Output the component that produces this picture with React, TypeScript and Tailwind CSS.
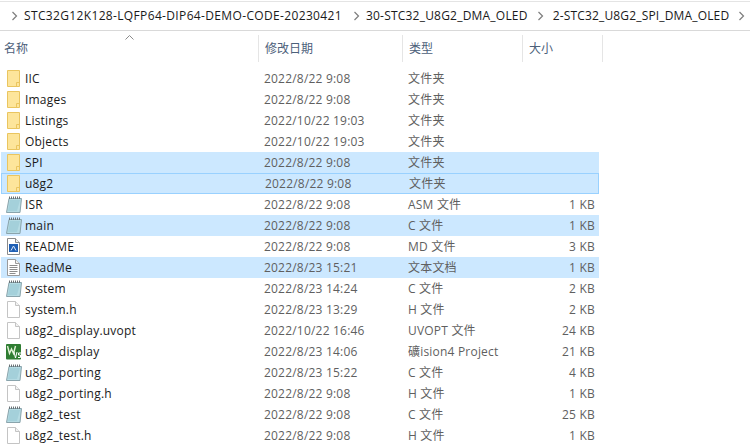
type Kind = 'folder' | 'asm' | 'word' | 'text' | 'blank' | 'keil';

type FileRow = {
  name: string;
  date: string;
  type: string;
  size?: string;
  kind: Kind;
  selected?: boolean;
  focused?: boolean;
};

const rows: FileRow[] = [
  { name: 'IIC', date: '2022/8/22 9:08', type: '文件夹', kind: 'folder' },
  { name: 'Images', date: '2022/8/22 9:08', type: '文件夹', kind: 'folder' },
  { name: 'Listings', date: '2022/10/22 19:03', type: '文件夹', kind: 'folder' },
  { name: 'Objects', date: '2022/10/22 19:03', type: '文件夹', kind: 'folder' },
  { name: 'SPI', date: '2022/8/22 9:08', type: '文件夹', kind: 'folder', selected: true },
  { name: 'u8g2', date: '2022/8/22 9:08', type: '文件夹', kind: 'folder', selected: true, focused: true },
  { name: 'ISR', date: '2022/8/22 9:08', type: 'ASM 文件', size: '1 KB', kind: 'asm' },
  { name: 'main', date: '2022/8/22 9:08', type: 'C 文件', size: '1 KB', kind: 'asm', selected: true },
  { name: 'README', date: '2022/8/22 9:08', type: 'MD 文件', size: '3 KB', kind: 'word' },
  { name: 'ReadMe', date: '2022/8/23 15:21', type: '文本文档', size: '1 KB', kind: 'text', selected: true },
  { name: 'system', date: '2022/8/23 14:24', type: 'C 文件', size: '2 KB', kind: 'asm' },
  { name: 'system.h', date: '2022/8/23 13:29', type: 'H 文件', size: '2 KB', kind: 'blank' },
  { name: 'u8g2_display.uvopt', date: '2022/10/22 16:46', type: 'UVOPT 文件', size: '24 KB', kind: 'blank' },
  { name: 'u8g2_display', date: '2022/8/23 14:06', type: '礦ision4 Project', size: '21 KB', kind: 'keil' },
  { name: 'u8g2_porting', date: '2022/8/23 15:22', type: 'C 文件', size: '4 KB', kind: 'asm' },
  { name: 'u8g2_porting.h', date: '2022/8/22 9:08', type: 'H 文件', size: '1 KB', kind: 'blank' },
  { name: 'u8g2_test', date: '2022/8/22 9:08', type: 'C 文件', size: '25 KB', kind: 'asm' },
  { name: 'u8g2_test.h', date: '2022/8/22 9:08', type: 'H 文件', size: '1 KB', kind: 'blank' },
];

function Chevron() {
  return (
    <svg width="7" height="10" viewBox="0 0 7 10" className="shrink-0">
      <path d="M1.5 1 L5.5 5 L1.5 9" fill="none" stroke="#7d7d7d" strokeWidth="1.2" />
    </svg>
  );
}

function Page({ stroke = '#c4c4c4', children }: { stroke?: string; children?: React.ReactNode }) {
  return (
    <svg width="16" height="17" viewBox="0 0 16 17" className="shrink-0">
      <path d="M1.5 .5 H9.5 L13.5 4.5 V16.5 H1.5 Z" fill="#fff" stroke={stroke} />
      <path d="M9.5 .5 V4.5 H13.5" fill="#f2f2f2" stroke={stroke} />
      {children}
    </svg>
  );
}

function FileIcon({ kind }: { kind: Kind }) {
  if (kind === 'folder') {
    return (
      <svg width="16" height="17" viewBox="0 0 16 17" className="shrink-0">
        <path d="M1.5 .5 H13.5 V16.5 H1.5 Z" fill="#fde59b" stroke="#eac55f" />
        <path d="M13 12.5 H10.5 V16" fill="none" stroke="#eac55f" />
      </svg>
    );
  }
  if (kind === 'asm') {
    return (
      <svg width="16" height="17" viewBox="0 0 16 17" className="shrink-0">
        <path d="M3 2.5 H15.5 L14 16.5 H.5 Z" fill="#b5dbe3" stroke="#8aa4ac" />
        <path d="M4 4 H14 L11 15 H2 Z" fill="#a4d0da" />
        <path d="M3.5 .5 V3 M5.5 .5 V3 M7.5 .5 V3 M9.5 .5 V3 M11.5 .5 V3 M13.5 .5 V3" stroke="#6a7377" />
      </svg>
    );
  }
  if (kind === 'word') {
    return (
      <Page stroke="#8a8a8a">
        <rect x="3" y="6" width="9" height="8" fill="#1f5fb4" />
        <path d="M5 12.5 L7.5 8 L10 12.5" fill="none" stroke="#dfe9f7" />
      </Page>
    );
  }
  if (kind === 'text') {
    return (
      <Page stroke="#9a9a9a">
        <path d="M3.5 6.5 H11.5 M3.5 8.5 H11.5 M3.5 10.5 H11.5 M3.5 12.5 H11.5 M3.5 14.5 H9.5" stroke="#8c8c8c" />
      </Page>
    );
  }
  if (kind === 'keil') {
    return (
      <svg width="16" height="16" viewBox="0 0 16 16" className="shrink-0">
        <rect x="0" y="0" width="15" height="15.5" rx="1" fill="#2f7d32" />
        <path d="M1.5 2 L3.5 9.5 L5.5 5 L7.5 9.5 L9.5 2" fill="none" stroke="#e4f3d8" strokeWidth="1.4" />
        <path d="M8 8 L9.5 14 L11 8" fill="none" stroke="#fff" />
        <path d="M15 9 H12.5 V11 H14.5 V13.5 H12" fill="none" stroke="#fff" />
      </svg>
    );
  }
  return <Page />;
}

export default function App() {
  return (
    <div className="w-[750px] h-[447px] overflow-hidden bg-white text-[12px] tracking-[.2px] font-['Open_Sans','Noto_Sans_CJK_SC',sans-serif]">
      <div className="h-[30px] mt-px border-t border-t-[#e4e4e4] border-b border-b-[#d9d9d9] flex items-center pl-[11px] text-[#1a1a1a] whitespace-nowrap">
        <Chevron />
        <span className="ml-[6px] tracking-[.35px]">STC32G12K128-LQFP64-DIP64-DEMO-CODE-20230421</span>
        <span className="ml-[11px]"><Chevron /></span>
        <span className="ml-[6px] tracking-[.21px]">30-STC32_U8G2_DMA_OLED</span>
        <span className="ml-[9px]"><Chevron /></span>
        <span className="ml-[9px] tracking-[.16px]">2-STC32_U8G2_SPI_DMA_OLED</span>
        <span className="ml-[9px]"><Chevron /></span>
      </div>

      <div className="relative flex h-[27px] mt-[4px] text-[#4c607a] tracking-normal items-center">
        <svg width="9" height="5" viewBox="0 0 9 5" className="absolute left-[125px] top-0">
          <path d="M.5 4.5 L4.5 .5 L8.5 4.5" fill="none" stroke="#8a8a8a" />
        </svg>
        <div className="w-[259px] h-full pl-[4px] flex items-center border-r border-[#e5e5e5]">名称</div>
        <div className="w-[144px] h-full pl-[6px] flex items-center border-r border-[#e5e5e5]">修改日期</div>
        <div className="w-[120px] h-full pl-[6px] flex items-center border-r border-[#e5e5e5]">类型</div>
        <div className="w-[80px] h-full pl-[6px] flex items-center border-r border-[#e5e5e5]">大小</div>
      </div>

      <div className="mt-[6px] w-[598px] ml-px">
        {rows.map((r) => (
          <div
            key={r.name}
            className={`flex h-[21px] items-center ${r.focused ? 'border border-[#99d1ff] bg-[#cce8ff]' : r.selected ? 'bg-[#cce8ff]' : ''}`}
          >
            <div className={`w-[257px] flex items-center gap-[3px] text-[#1a1a1a] ${r.focused ? 'pl-[4px]' : 'pl-[5px]'}`}>
              <FileIcon kind={r.kind} />
              <span>{r.name}</span>
            </div>
            <div className="w-[144px] pl-[6px] text-[#5f5f5f]">{r.date}</div>
            <div className="w-[120px] pl-[6px] text-[#5f5f5f]">{r.type}</div>
            <div className="flex-1 pr-[4px] text-right text-[#5f5f5f]">{r.size}</div>
          </div>
        ))}
      </div>
    </div>
  );
}
